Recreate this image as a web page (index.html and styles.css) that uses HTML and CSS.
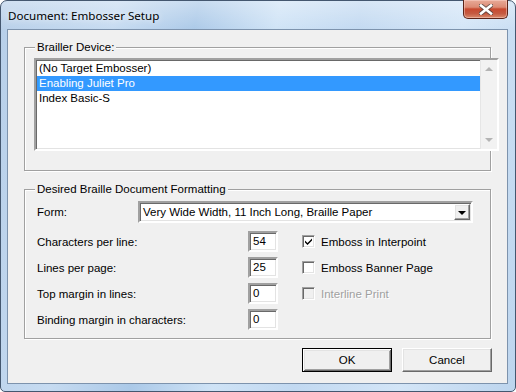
FILE: index.html
```html
<!DOCTYPE html>
<html>
<head>
<meta charset="utf-8">
<link rel="stylesheet" href="styles.css">
</head>
<body>
<div class="window">
  <div class="titlebar">
    <span class="title">Document: Embosser Setup</span>
    <div class="close">
      <svg width="14" height="11" viewBox="0 0 14 11">
        <path d="M2 1.5 L12 9.5 M12 1.5 L2 9.5" stroke="#3a3a3a" stroke-width="4.4" stroke-linecap="square" fill="none" opacity="0.7"/>
        <path d="M2 1.5 L12 9.5 M12 1.5 L2 9.5" stroke="#ffffff" stroke-width="2.6" stroke-linecap="square" fill="none"/>
      </svg>
    </div>
  </div>
  <div class="client">
    <div class="group group1">
      <div class="legend">Brailler Device:</div>
      <div class="listbox">
        <div class="items">
          <div class="item">(No Target Embosser)</div>
          <div class="item selected">Enabling Juliet Pro</div>
          <div class="item">Index Basic-S</div>
        </div>
        <div class="scrollbar">
          <span class="arrow up"></span>
          <span class="arrow down"></span>
        </div>
      </div>
    </div>
    <div class="group group2">
      <div class="legend">Desired Braille Document Formatting</div>
      <div class="form-row">
        <span class="label form-label">Form:</span>
        <div class="combo">
          <span class="combo-text">Very Wide Width, 11 Inch Long, Braille Paper</span>
          <span class="combo-btn"><span class="tri"></span></span>
        </div>
      </div>
      <div class="grid">
        <span class="label">Characters per line:</span>
        <span class="edit">54</span>
        <label class="check"><span class="box checked"><svg width="9" height="9" viewBox="0 0 9 9"><path d="M1 3.5 L3.5 6 L8 1.5 L8 3.5 L3.5 8 L1 5.5 Z" fill="#000"/></svg></span>Emboss in Interpoint</label>
        <span class="label">Lines per page:</span>
        <span class="edit">25</span>
        <label class="check"><span class="box"></span>Emboss Banner Page</label>
        <span class="label">Top margin in lines:</span>
        <span class="edit">0</span>
        <label class="check disabled"><span class="box"></span>Interline Print</label>
        <span class="label">Binding margin in characters:</span>
        <span class="edit">0</span>
        <span></span>
      </div>
    </div>
    <div class="buttons">
      <button class="btn default">OK</button>
      <button class="btn">Cancel</button>
    </div>
  </div>
</div>
</body>
</html>
```
FILE: styles.css
```css
* { box-sizing: border-box; }
html, body { margin: 0; padding: 0; background: #ffffff; }
body { width: 516px; height: 392px; overflow: hidden; }

.window {
  width: 516px;
  height: 392px;
  border: 1px solid #44576f;
  border-radius: 7px 7px 5px 5px;
  background:
    linear-gradient(to bottom, rgba(255,255,255,0.35), rgba(255,255,255,0) 30px),
    linear-gradient(100deg, #b7cfe9 0%, #c6dbf1 20%, #abc9e8 34%, #cfe3f6 48%, #c2d9f1 62%, #d3e5f7 80%, #bdd5ee 100%);
  padding: 0 7px 7px 6px;
  display: flex;
  flex-direction: column;
  font-family: "Liberation Sans", Arial, sans-serif;
  font-size: 11.5px;
  color: #000;
}

.titlebar {
  height: 28px;
  display: flex;
  align-items: flex-start;
  justify-content: space-between;
}
.title {
  font-family: "Noto Sans", "Open Sans", sans-serif;
  font-size: 11.6px;
  line-height: 14px;
  margin-top: 8px;
  margin-left: 1px;
  color: #000;
  text-shadow: 0 0 6px rgba(255,255,255,0.9);
}
.close {
  width: 45px;
  height: 19px;
  margin-top: -1px;
  border: 1px solid #5a2318;
  border-top: none;
  border-radius: 0 0 5px 5px;
  background: linear-gradient(to bottom, #e8aa98 0%, #dc8b75 40%, #c8492f 50%, #c55a41 75%, #d98a6c 100%);
  box-shadow: inset 0 0 0 1px rgba(255,220,210,0.45);
  display: flex;
  align-items: center;
  justify-content: center;
}

.client {
  flex: 1;
  background: #f0f0f0;
  border: 1px solid #7d93ad;
  display: flex;
  flex-direction: column;
}

.group {
  margin-left: 16px;
  width: 467px;
  border: 1px solid #a0a0a0;
  box-shadow: inset 1px 1px 0 #ffffff, 1px 1px 0 #ffffff;
}
.group1 { margin-top: 17px; height: 124px; }
.group2 { margin-top: 18px; height: 150px; }

.legend {
  margin: -8px 0 0 10px;
  padding: 0 2px;
  width: fit-content;
  line-height: 14px;
  background: #f0f0f0;
}

.listbox {
  margin: 4px 0 0 9px;
  width: 465px;
  height: 93px;
  background: #ffffff;
  border-style: solid;
  border-width: 2px;
  border-color: #a0a0a0 #ffffff #ffffff #a0a0a0;
  box-shadow: inset 1px 1px 0 #696969, inset -1px -1px 0 #e3e3e3;
  display: flex;
  padding: 1px 1px 1px 1px;
}
.items { flex: 1; padding-top: 0; }
.item {
  height: 15px;
  line-height: 15px;
  padding-left: 2px;
  white-space: nowrap;
}
.item.selected { background: #3399ff; color: #ffffff; }
.scrollbar {
  width: 17px;
  margin: -1px -1px -1px 0;
  background: #f2f2f2;
  border-left: 1px solid #e6e6e6;
  display: flex;
  flex-direction: column;
  justify-content: space-between;
  align-items: center;
  padding: 7px 0 7px;
}
.arrow { width: 0; height: 0; border-left: 4px solid transparent; border-right: 4px solid transparent; }
.arrow.up { border-bottom: 4px solid #b4b4b4; }
.arrow.down { border-top: 4px solid #b4b4b4; }

.form-row {
  display: flex;
  align-items: center;
  margin-top: 5px;
}
.label { white-space: nowrap; line-height: 14px; }
.form-label { margin-left: 12px; width: 101px; }
.combo {
  width: 335px;
  height: 22px;
  background: #ffffff;
  border-style: solid;
  border-width: 2px;
  border-color: #a0a0a0 #ffffff #ffffff #a0a0a0;
  box-shadow: inset 1px 1px 0 #696969, inset -1px -1px 0 #e3e3e3;
  display: flex;
  align-items: stretch;
  padding: 1px;
}
.combo-text { flex: 1; line-height: 16px; padding-left: 2px; white-space: nowrap; }
.combo-btn {
  width: 16px;
  background: #f0f0f0;
  border-style: solid;
  border-width: 1px;
  border-color: #ffffff #696969 #696969 #ffffff;
  box-shadow: inset -1px -1px 0 #a0a0a0, inset 1px 1px 0 #e3e3e3;
  display: flex;
  align-items: center;
  justify-content: center;
}
.tri { width: 0; height: 0; border-left: 4px solid transparent; border-right: 4px solid transparent; border-top: 4px solid #000; margin-top: 1px; }

.grid {
  display: grid;
  grid-template-columns: 211px 30px auto;
  grid-auto-rows: 21px;
  row-gap: 5px;
  column-gap: 0;
  margin: 8px 0 0 12px;
  align-items: center;
}
.edit {
  width: 30px;
  height: 21px;
  background: #ffffff;
  border-style: solid;
  border-width: 2px;
  border-color: #a0a0a0 #ffffff #ffffff #a0a0a0;
  box-shadow: inset 1px 1px 0 #696969, inset -1px -1px 0 #e3e3e3;
  padding: 1px 0 0 3px;
  line-height: 15px;
}
.check {
  display: flex;
  align-items: center;
  gap: 6px;
  margin-left: 24px;
  white-space: nowrap;
  line-height: 14px;
}
.box {
  width: 13px;
  height: 13px;
  background: #ffffff;
  border-style: solid;
  border-width: 1px;
  border-color: #a0a0a0 #ffffff #ffffff #a0a0a0;
  box-shadow: inset 1px 1px 0 #696969, inset -1px -1px 0 #e3e3e3;
  display: flex;
  align-items: center;
  justify-content: center;
}
.check.disabled { color: #a0a0a0; text-shadow: 1px 1px 0 #ffffff; }
.check.disabled .box { background: #f0f0f0; }

.buttons {
  display: flex;
  justify-content: flex-end;
  gap: 10px;
  margin: 9px 15px 0 0;
}
.btn {
  width: 90px;
  height: 24px;
  font-family: "Liberation Sans", Arial, sans-serif;
  font-size: 11.5px;
  color: #000;
  background: #f0f0f0;
  border-style: solid;
  border-width: 1px;
  border-color: #ffffff #696969 #696969 #ffffff;
  box-shadow: inset -1px -1px 0 #a0a0a0, inset 1px 1px 0 #e3e3e3;
  padding: 0;
}
.btn.default {
  border: 1px solid #000000;
  box-shadow: inset 1px 1px 0 #ffffff, inset -1px -1px 0 #696969, inset 2px 2px 0 #e3e3e3, inset -2px -2px 0 #a0a0a0;
}
```
